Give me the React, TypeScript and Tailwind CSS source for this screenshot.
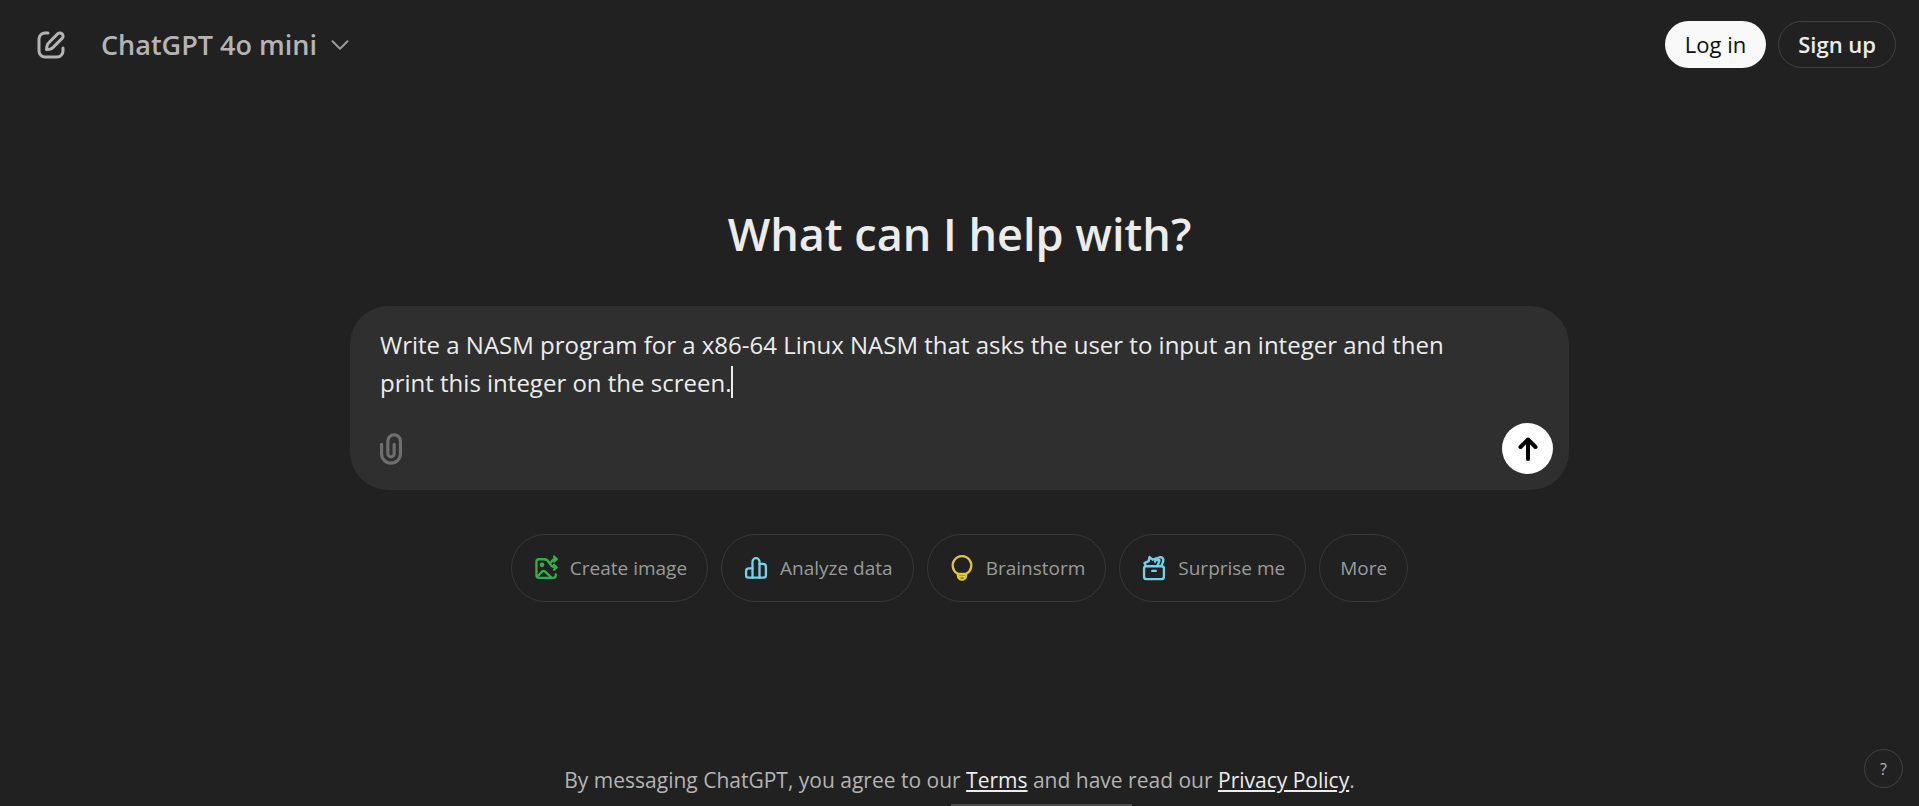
import { ReactNode, useState } from "react";

interface Suggestion {
  label: string;
  color?: string;
  icon?: ReactNode;
}

interface IconProps {
  className?: string;
  strokeWidth?: number;
  children: ReactNode;
}

function Icon({ className = "size-7", strokeWidth = 2, children }: IconProps) {
  return (
    <svg className={`shrink-0 ${className}`} viewBox="0 0 24 24" fill="none" stroke="currentColor"
      strokeWidth={strokeWidth} strokeLinecap="round" strokeLinejoin="round" aria-hidden="true">
      {children}
    </svg>
  );
}

const SUGGESTIONS: Suggestion[] = [
  { label: "Create image", color: "text-[#35ae47]", icon: (
    <Icon>
      <path d="M11 4.5H6a2.200 2.200 0 0 0-2.200 2.200v11.600A2.200 2.200 0 0 0 6 20.500h12.200a2.200 2.200 0 0 0 2.200-2.200v-.8" />
      <path d="M4.500 19.500l4.300-4.600a1.500 1.500 0 0 1 2.200 0l5.500 5.200" />
      <circle cx="8.600" cy="9.300" r="1" fill="currentColor" />
      <path d="M11 4.500c2 0 3 1.800 4 3.500s2 3.400 5.500 3.400M16 7.500c1-1.700 2-3.200 4.500-3.200" />
      <path d="M18.900 2.200l2.300 2.100-2.300 2.100M18.900 9.300l2.300 2.100-2.300 2.100" />
    </Icon>
  )},
  { label: "Analyze data", color: "text-[#76d0eb]", icon: (
    <Icon>
      <path d="M9 20.300V6.600a3 3 0 0 1 6 0v13.700" />
      <path d="M9 12.300H6A2.500 2.500 0 0 0 3.500 14.800v3.500a2 2 0 0 0 2 2h13a2 2 0 0 0 2-2V11A2.500 2.500 0 0 0 18 8.500h-3" />
    </Icon>
  )},
  { label: "Brainstorm", color: "text-[#e2c541]", icon: (
    <Icon>
      <path d="M8.500 17a8 8 0 1 1 7 0z" />
      <path d="M8.500 17v1.500a3.500 3.500 0 0 0 7 0V17M9 19.300h6" />
    </Icon>
  )},
  { label: "Surprise me", color: "text-[#76d0eb]", icon: (
    <Icon>
      <rect x="3.500" y="10.500" width="17" height="11" rx="2" />
      <path d="M10.500 14.500h3" />
      <path d="M5 10.300L3.800 7.800l3.600-1.700.8-3.500 2.600 2.300 3.300-1.200-1.100 2.900" />
      <path d="M15 4.300c.8-2.400 5.200-2 5 1.200-.1 2-1.200 3-1.800 4.800M15 4.300c-.3 1.300 1.400 1.600 1.700.9 0 2-1.300 3-1.900 5" />
    </Icon>
  )},
  { label: "More" },
];

const PROMPT = "Write a NASM program for a x86-64 Linux NASM that asks the user to input an integer and then print this integer on the screen.";

function Header() {
  return (
    <header className="flex items-center justify-between pl-[33px] pr-[23px] pt-[21px]">
      <div className="flex items-center gap-8">
        <button aria-label="New chat" className="text-[#b4b4b4]">
          <Icon className="size-9">
            <path d="M10 4H8a4 4 0 0 0-4 4v8a4 4 0 0 0 4 4h8a4 4 0 0 0 4-4v-2" />
            <path d="M16.400 4.600a2.100 2.100 0 0 1 3 3l-6 6a4.500 4.500 0 0 1-2.400 1.200L9 15l.3-2.200a4.500 4.500 0 0 1 1.200-2.300z" />
          </Icon>
        </button>
        <button className="flex items-center gap-[14px] text-[27px] font-semibold leading-10 text-[#b4b4b4]">
          ChatGPT 4o mini
          <svg className="w-[18px] h-[10px] text-[#9b9b9b]" viewBox="0 0 18 10" fill="none" stroke="currentColor" strokeWidth="2"
            strokeLinecap="round" strokeLinejoin="round" aria-hidden="true">
            <path d="M1.500 1.200l7.500 7.500 7.500-7.500" />
          </svg>
        </button>
      </div>
      <div className="flex gap-3">
        <button className="h-[47px] px-5 rounded-full bg-[#f9f9f9] text-[22px] font-medium text-[#0d0d0d]">Log in</button>
        <button className="h-[47px] px-[19px] rounded-full border border-[#424242] text-[22px] font-semibold text-[#ececec]">Sign up</button>
      </div>
    </header>
  );
}

function Composer() {
  const [text, setText] = useState(PROMPT);

  return (
    <form className="w-full rounded-[38px] bg-[#2f2f2f] pl-[30px] pr-4 pt-5 pb-4" onSubmit={e => e.preventDefault()}>
      <div className="relative mr-20">
        <textarea aria-label="Message ChatGPT" rows={2} value={text} onChange={e => setText(e.target.value)}
          className="block w-full resize-none bg-transparent text-[24px] leading-[38px] text-[#ececec] outline-none" />
        <span className="absolute bottom-1 left-[351px] h-8 w-0.5 bg-[#ececec]" />
      </div>
      <div className="mt-[21px] flex items-center justify-between">
        <button type="button" aria-label="Attach files" className="text-[#6f6f6f]">
          <svg className="w-[22px] h-8" viewBox="5 2 14 20" fill="none" stroke="currentColor" strokeWidth="2"
            strokeLinecap="round" strokeLinejoin="round" aria-hidden="true">
            <path d="M6 9v6a6 6 0 0 0 12 0V7a4 4 0 0 0-8 0v8a2 2 0 0 0 4 0V9" />
          </svg>
        </button>
        <button aria-label="Send prompt" className="flex size-[51px] items-center justify-center rounded-full bg-white text-black">
          <svg className="w-5 h-6" viewBox="0 0 20 24" fill="none" stroke="currentColor" strokeWidth="4"
            strokeLinecap="round" strokeLinejoin="round" aria-hidden="true">
            <path d="M10 22V3M2.500 10L10 2.500l7.500 7.500" />
          </svg>
        </button>
      </div>
    </form>
  );
}

export default function App() {
  return (
    <div className="relative flex min-h-screen flex-col bg-[#212121] font-['Open_Sans','Noto_Sans',sans-serif]">
      <Header />

      <main className="mx-auto flex w-full max-w-[1219px] flex-1 flex-col items-center pt-[138px]">
        <h1 className="text-[45px] font-semibold leading-[56px] text-[#ececec]">What can I help with?</h1>
        <div className="mt-11 w-full">
          <Composer />
        </div>
        <div className="mt-11 flex gap-[13px]">
          {SUGGESTIONS.map(s => (
            <button key={s.label} className="flex h-[68px] items-center gap-[10px] rounded-full border border-[#383838] px-5 text-[19px] text-[#9b9b9b]">
              {s.icon && <span className={s.color}>{s.icon}</span>}
              {s.label}
            </button>
          ))}
        </div>
      </main>

      <footer className="pb-2 text-center text-[21px] leading-8 text-[#b4b4b4]">
        By messaging ChatGPT, you agree to our <a href="#terms" className="text-[#ececec] underline">Terms</a> and
        have read our <a href="#privacy" className="text-[#ececec] underline">Privacy Policy</a>.
      </footer>
      <div className="mx-auto h-0.5 w-[181px] translate-x-[82px] bg-[#4a4a4a]" />

      <button aria-label="Help" className="absolute right-4 bottom-[18px] size-[39px] rounded-full border border-[#424242] text-base text-[#b4b4b4]">
        ?
      </button>
    </div>
  );
}
